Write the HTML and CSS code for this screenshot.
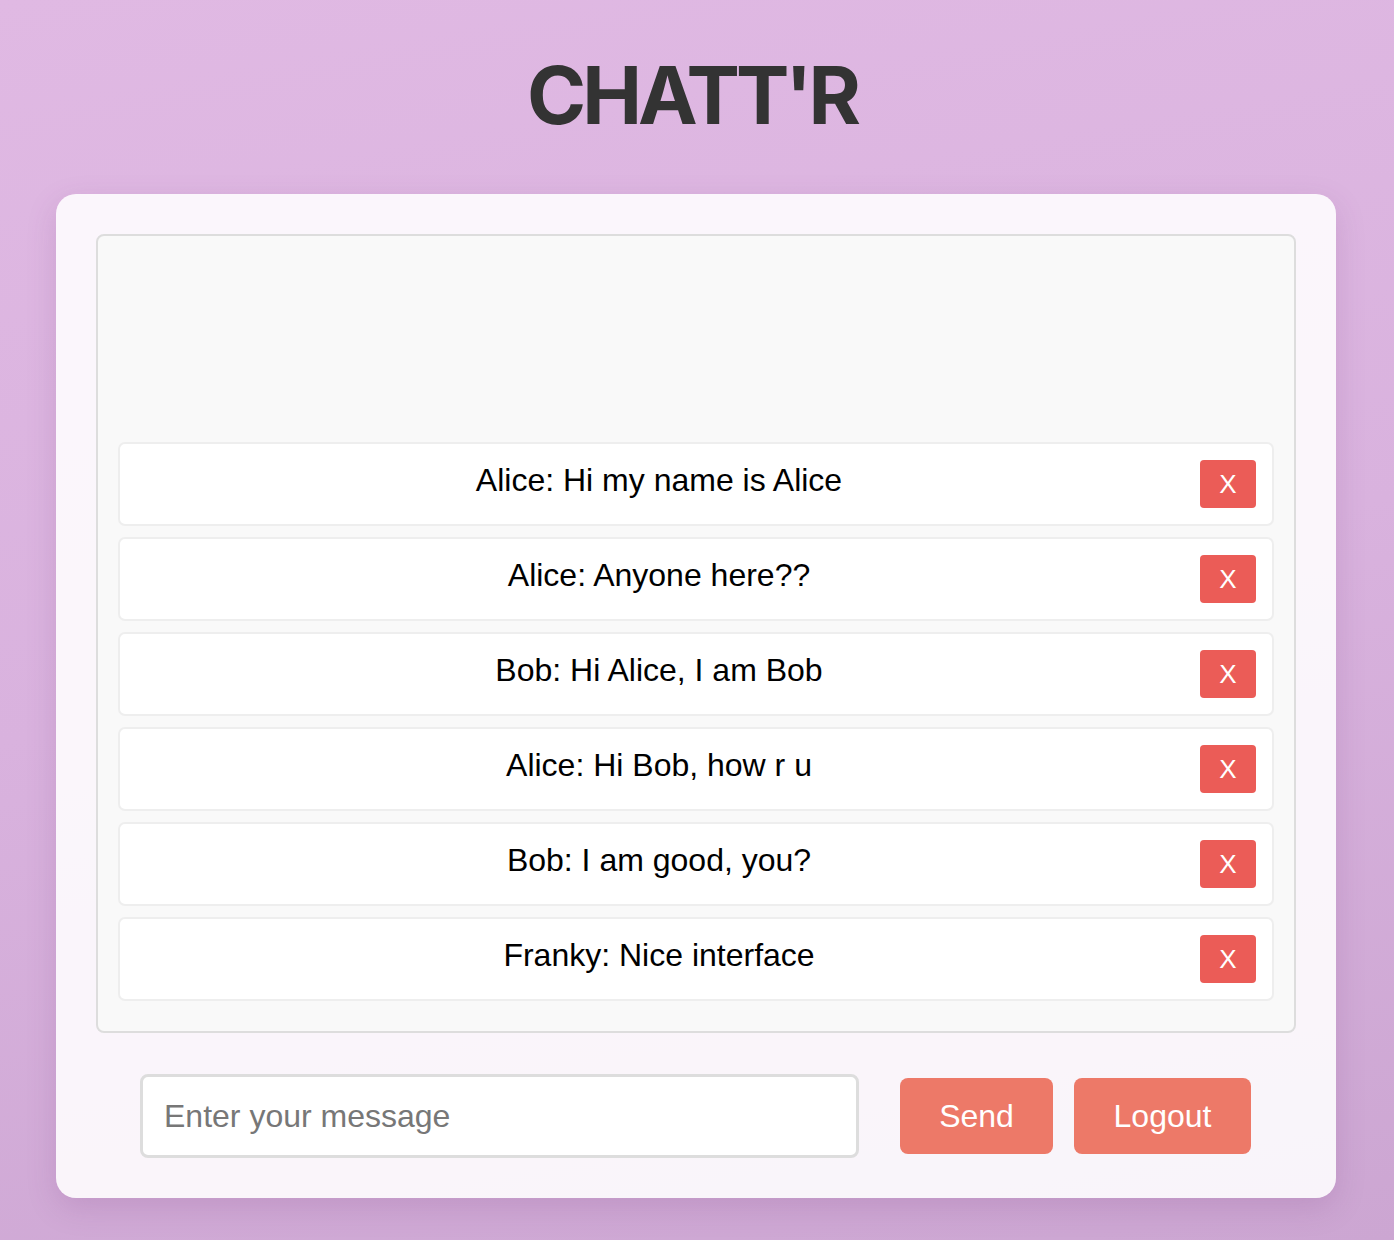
FILE: index.html
```html
<!DOCTYPE html>
<html lang="en">
<head>
<meta charset="utf-8">
<title>Chatt'r</title>
<link rel="stylesheet" href="styles.css">
</head>
<body>
<h1 class="title">CHATT'R</h1>
<main class="card">
  <section class="messages">
    <div class="msg"><p class="msg-text">Alice: Hi my name is Alice</p><button class="del">X</button></div>
    <div class="msg"><p class="msg-text">Alice: Anyone here??</p><button class="del">X</button></div>
    <div class="msg"><p class="msg-text">Bob: Hi Alice, I am Bob</p><button class="del">X</button></div>
    <div class="msg"><p class="msg-text">Alice: Hi Bob, how r u</p><button class="del">X</button></div>
    <div class="msg"><p class="msg-text">Bob: I am good, you?</p><button class="del">X</button></div>
    <div class="msg"><p class="msg-text">Franky: Nice interface</p><button class="del">X</button></div>
  </section>
  <form class="composer">
    <input class="input" type="text" placeholder="Enter your message">
    <div class="actions">
      <button type="button" class="btn btn-send">Send</button>
      <button type="button" class="btn btn-logout">Logout</button>
    </div>
  </form>
</main>
</body>
</html>
```
FILE: styles.css
```css
* { box-sizing: border-box; }
html, body { margin: 0; height: 100%; }
body {
  background: linear-gradient(170deg, #e0b9e3 0%, #d9b2de 50%, #cca6d2 100%);
  font-family: "Liberation Sans", Arial, sans-serif;
  padding-top: 40px;
  min-height: 1240px;
}
.title {
  margin: 0;
  padding-right: 10px;
  text-align: center;
  font-family: Inter, "Noto Sans", sans-serif;
  font-weight: 700;
  font-size: 80px;
  line-height: 110px;
  color: #333;
  letter-spacing: -4px;
}
.card {
  margin: 44px 58px 0 56px;
  background: rgba(255, 255, 255, 0.88);
  border-radius: 20px;
  padding: 40px;
  box-shadow: 0 10px 30px rgba(120, 60, 130, 0.18);
  height: 1004px;
  display: flex;
  flex-direction: column;
}
.messages {
  height: 799px;
  border: 2px solid #dddddd;
  border-radius: 8px;
  background: #f9f9f9;
  padding: 20px 20px 30px;
  display: flex;
  flex-direction: column;
  justify-content: flex-end;
  gap: 11px;
}
.msg {
  height: 84px;
  background: #fff;
  border: 2px solid #eeeeee;
  border-radius: 7px;
  display: flex;
  align-items: center;
  padding: 0 16px 0 0;
}
.msg-text {
  flex: 1;
  margin: 0 2px 8px 0;
  text-align: center;
  font-size: 32px;
  color: #000;
}
.del {
  width: 56px;
  height: 48px;
  border: none;
  border-radius: 4px;
  background: #eb5c57;
  color: #fff;
  font-family: "Liberation Sans", Arial, sans-serif;
  font-size: 26px;
  padding: 0;
}
.composer {
  margin-top: 41px;
  display: flex;
  align-items: center;
  justify-content: center;
  gap: 41px;
  padding-right: 1px;
}
.input {
  width: 719px;
  height: 84px;
  border: 3px solid #dddddd;
  border-radius: 8px;
  background: #fff;
  padding: 0 21px;
  font-family: "Liberation Sans", Arial, sans-serif;
  font-size: 32px;
  color: #333;
}
.input::placeholder { color: #777; }
.actions { display: flex; gap: 21px; }
.btn {
  height: 76px;
  border: none;
  border-radius: 8px;
  background: #ed7968;
  color: #fff;
  font-family: "Liberation Sans", Arial, sans-serif;
  font-size: 32px;
  padding: 0;
}
.btn-send { width: 153px; }
.btn-logout { width: 177px; }
```
